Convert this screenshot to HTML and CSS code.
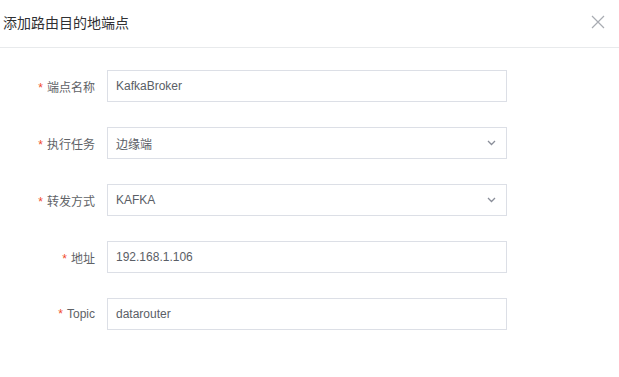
FILE: index.html
```html
<!DOCTYPE html>
<html lang="zh">
<head>
<meta charset="utf-8">
<link rel="stylesheet" href="styles.css">
</head>
<body>
<div class="dialog">
  <div class="header">
    <span class="title">添加路由目的地端点</span>
    <svg class="close" width="14" height="14" viewBox="0 0 14 14"><path d="M1 1L13 13M13 1L1 13" stroke="#a8abb2" stroke-width="1.2" fill="none"/></svg>
  </div>
  <div class="form">
    <div class="row">
      <label class="label"><span class="req">*</span>端点名称</label>
      <div class="field">KafkaBroker</div>
    </div>
    <div class="row">
      <label class="label"><span class="req">*</span>执行任务</label>
      <div class="field select">边缘端
        <svg class="chev" width="9" height="6" viewBox="0 0 9 6"><path d="M1 1L4.5 4.5L8 1" stroke="#8a8e99" stroke-width="1.3" fill="none"/></svg>
      </div>
    </div>
    <div class="row">
      <label class="label"><span class="req">*</span>转发方式</label>
      <div class="field select">KAFKA
        <svg class="chev" width="9" height="6" viewBox="0 0 9 6"><path d="M1 1L4.5 4.5L8 1" stroke="#8a8e99" stroke-width="1.3" fill="none"/></svg>
      </div>
    </div>
    <div class="row">
      <label class="label"><span class="req">*</span>地址</label>
      <div class="field">192.168.1.106</div>
    </div>
    <div class="row">
      <label class="label"><span class="req">*</span>Topic</label>
      <div class="field">datarouter</div>
    </div>
  </div>
</div>
</body>
</html>
```
FILE: styles.css
```css
html, body {
  margin: 0;
  padding: 0;
  background: #fff;
}
body {
  font-family: "Liberation Sans", Arial, "Noto Sans CJK SC", sans-serif;
  color: #5a5e66;
}
.dialog {
  width: 619px;
}
.header {
  height: 47px;
  border-bottom: 1px solid #e8eaec;
  display: flex;
  align-items: center;
  justify-content: space-between;
  padding: 0 14px 4px 3px;
  box-sizing: border-box;
  height: 48px;
}
.title {
  font-size: 14px;
  color: #303133;
}
.close {
  display: block;
  margin-top: 1px;
}
.form {
  padding-top: 22px;
  display: flex;
  flex-direction: column;
  gap: 25px;
}
.row {
  display: flex;
  align-items: center;
  height: 32px;
}
.label {
  width: 95px;
  padding-right: 12px;
  text-align: right;
  font-size: 12px;
  color: #606266;
  box-sizing: content-box;
}
.req {
  color: #f04a2b;
  margin-right: 4px;
}
.field {
  width: 400px;
  height: 32px;
  box-sizing: border-box;
  border: 1px solid #dcdfe6;
  padding: 0 8px;
  display: flex;
  align-items: center;
  font-size: 12px;
  color: #5a5e66;
}
.select {
  justify-content: space-between;
  padding-right: 10px;
}
.chev {
  display: block;
}
```
